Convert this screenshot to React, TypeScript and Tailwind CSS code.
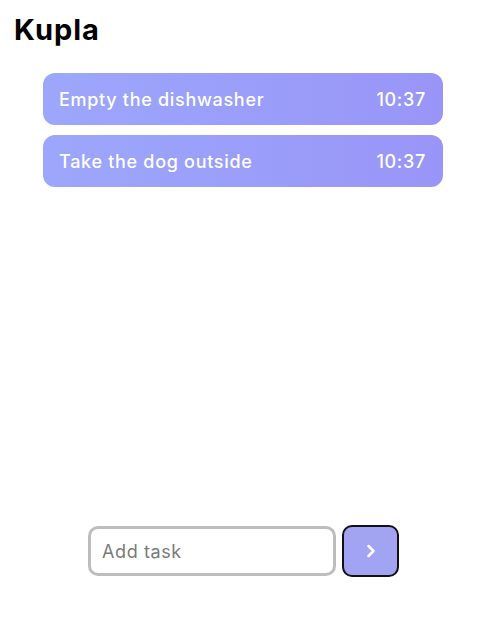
import { ChevronRight } from "lucide-react";

const tasks = [
  { title: "Empty the dishwasher", time: "10:37" },
  { title: "Take the dog outside", time: "10:37" },
];

export default function App() {
  return (
    <div className="min-h-[641px] flex flex-col bg-white font-['Inter','DejaVu_Sans',sans-serif]">
      <h1 className="pl-[14px] pt-[12px] text-[29px] font-bold leading-[36px] text-black tracking-[1px]">
        Kupla
      </h1>

      <main className="flex-1 flex flex-col gap-[10px] pl-[43px] mt-[25px]">
        {tasks.map((t) => (
          <div
            key={t.title}
            className="w-[400px] h-[52px] flex items-center justify-between rounded-[12px] pl-4 pr-[17px] bg-gradient-to-r from-[#9ca7fb] to-[#9995f8] text-white text-[18px] font-medium tracking-[0.7px]"
          >
            <span>{t.title}</span>
            <span>{t.time}</span>
          </div>
        ))}
      </main>

      <div className="flex justify-center items-center gap-[6px] pb-[64px] pl-[5px]">
        <input
          placeholder="Add task"
          className="w-[248px] h-[50px] rounded-[10px] border-[3px] border-[#bdbdbd] px-[11px] text-[18px] tracking-[0.6px] text-gray-700 placeholder:text-[#7a7a7a] outline-none"
        />
        <button className="w-[57px] h-[52px] rounded-[10px] border-2 border-[#111] bg-[#a3a3f3] flex items-center justify-center">
          <ChevronRight className="w-5 h-5 text-white" strokeWidth={3} />
        </button>
      </div>
    </div>
  );
}
